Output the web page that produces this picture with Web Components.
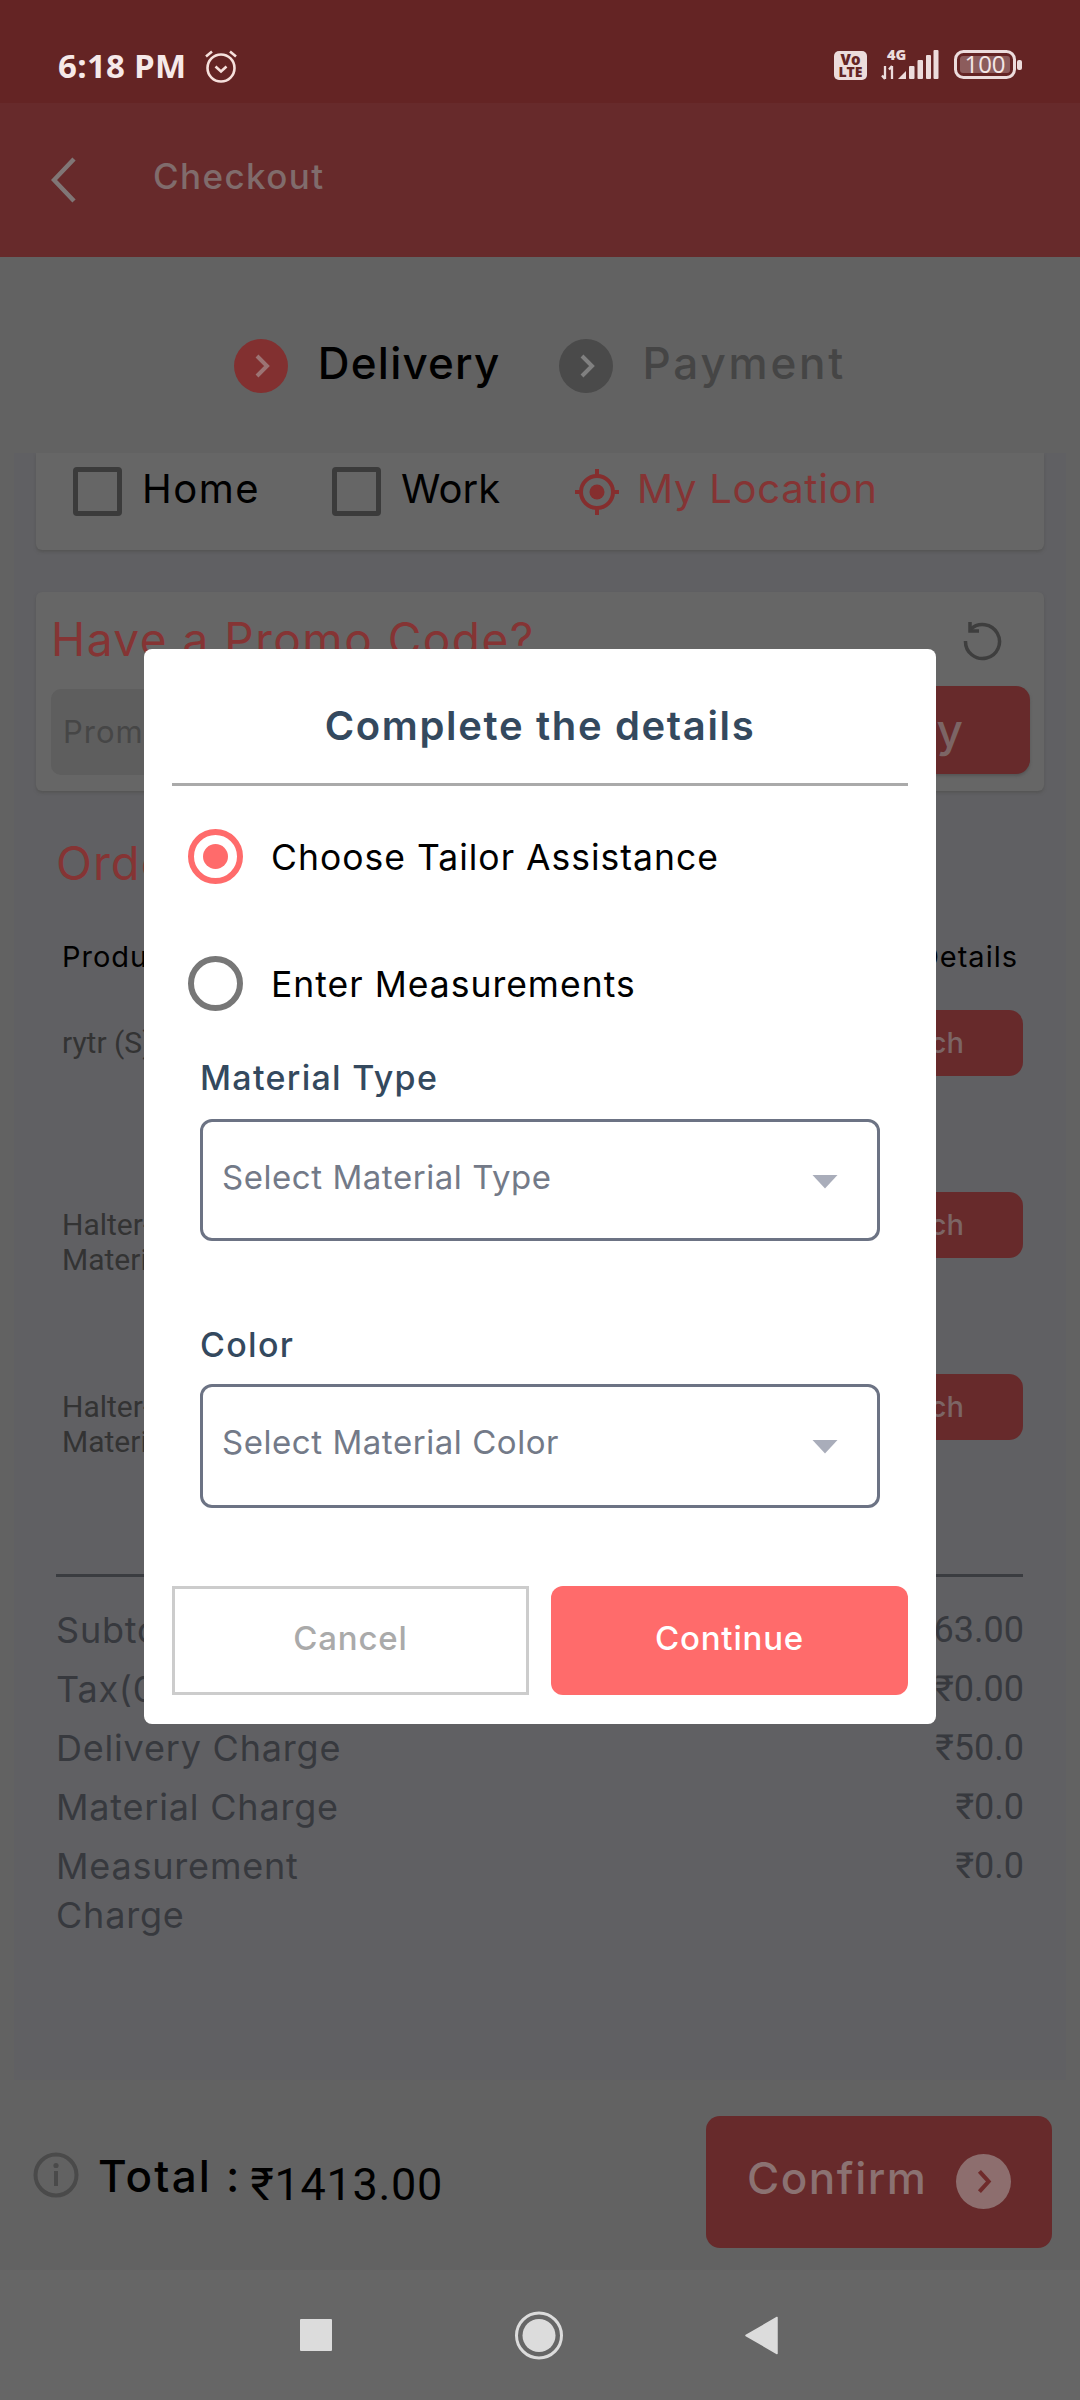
<!DOCTYPE html>
<html lang="en"><head><meta charset="utf-8"><title>Checkout</title>
<style>
html,body{margin:0;padding:0;background:#626262}
body{width:1080px;height:2400px;overflow:hidden;font-family:"Inter","Noto Sans",sans-serif}
</style></head><body>
<checkout-screen>
  <status-bar slot="status"></status-bar>
  <app-bar slot="bar"></app-bar>
  <step-header slot="steps"></step-header>
  <scroll-panel slot="panel">
    <address-card></address-card>
    <promo-card></promo-card>
    <order-summary></order-summary>
  </scroll-panel>
  <total-bar slot="total"></total-bar>
  <nav-bar slot="nav"></nav-bar>
  <details-dialog slot="dialog"></details-dialog>
</checkout-screen>
<script>
const P='"Inter","Noto Sans",sans-serif', R='Roboto,"Noto Sans",sans-serif';
function def(name,css,html){
  customElements.define(name,class extends HTMLElement{
    constructor(){super();this.attachShadow({mode:'open'});}
    connectedCallback(){const h=typeof html==='function'?html(this):html;this.shadowRoot.innerHTML='<style>'+css+'</style>'+h;}
  });
}
const chev=(c,w=4)=>`<svg width="54" height="54" viewBox="0 0 54 54"><path d="M23 17l10 10-10 10" fill="none" stroke="${c}" stroke-width="${w}"/></svg>`;

def('checkout-screen',`
:host{display:block;position:relative;width:1080px;height:2400px;overflow:hidden}
.col{display:flex;flex-direction:column;height:100%}
`,`<div class="col"><slot name="status"></slot><slot name="bar"></slot><slot name="steps"></slot><slot name="panel"></slot><slot name="total"></slot><slot name="nav"></slot></div><slot name="dialog"></slot>`);

def('status-bar',`
:host{display:flex;align-items:center;height:103px;background:#642424;color:#f6e9e9;box-sizing:border-box;padding:29px 58px 0;flex:none}
.t{font:700 33px/44px "Open Sans",sans-serif;margin-right:16px;white-space:nowrap;letter-spacing:.3px}
.sp{flex:1}
svg{display:block}
svg text{font-family:"Open Sans",sans-serif}
`,`<span class="t">6:18 PM</span>
<svg width="36" height="36" viewBox="0 0 36 36" fill="none" stroke="#f6e0dc" stroke-width="2.6"><circle cx="18" cy="20" r="13.5"/><path d="M12.5 18.5l5.5 5 5.5-5M3 8.5l6-5M33 8.5l-6-5"/></svg>
<span class="sp"></span>
<svg style="margin-right:-2px" width="190" height="44" viewBox="834 45 190 44">
<rect x="834" y="52" width="33" height="29" rx="5" fill="#ecdcdc"/>
<text x="850.5" y="65.500" font-size="15" font-weight="800" text-anchor="middle" fill="#642424">Vo</text>
<text x="850.5" y="78" font-size="14" font-weight="800" text-anchor="middle" fill="#642424">LTE</text>
<text x="887" y="61" font-size="14.5" font-weight="800" fill="#ecdcdc">4G</text>
<path d="M885 67v13M882 76.500l3 3.500M892 80V67M889 70.500l3-3.500" stroke="#ecdcdc" stroke-width="2.300" fill="none"/>
<g fill="#ecdcdc"><path d="M898 80l8-8v8z"/><rect x="909" y="67" width="5.500" height="13" rx="1"/><rect x="917.500" y="61" width="5.500" height="19" rx="1"/><rect x="926" y="56" width="5" height="24" rx="1"/><rect x="933.500" y="51" width="5" height="29" rx="1"/></g>
<rect x="955.500" y="52.500" width="59" height="26" rx="8" fill="none" stroke="#ecdcdc" stroke-width="3"/>
<rect x="960" y="57" width="50" height="17" rx="3" fill="#8c5c5c"/>
<text x="985" y="74" font-size="24" font-weight="500" text-anchor="middle" fill="#f3e7e7">100</text>
<rect x="1017" y="61" width="5" height="10" rx="2" fill="#ecdcdc"/>
</svg>`);

def('app-bar',`
:host{display:flex;align-items:center;height:154px;background:#672a2b;flex:none;box-sizing:border-box;padding:0 0 8px 51px}
span{font:500 35px/44px ${P};color:#806c6c;margin-left:77px;letter-spacing:1.400px}
svg{display:block;margin-top:8px}
`,`<svg width="25" height="46" viewBox="0 0 25 46"><path d="M23 2L3 23l20 21" fill="none" stroke="#807676" stroke-width="4.500"/></svg><span>Checkout</span>`);

def('step-header',`
:host{display:flex;align-items:center;justify-content:center;height:196px;background:#626262;flex:none;box-sizing:border-box;padding:22px 0 0}
.c{width:54px;height:54px;border-radius:50%;display:block;flex:none}
.a{background:#823030}.b{background:#4a4a4a}
span{font:500 44px/56px ${P};white-space:nowrap}
.t1{color:#000;margin:-6px 58px 0 30px;letter-spacing:1.200px}
.t2{color:#454545;margin:-6px 0 0 30px;letter-spacing:2.800px}
`,`<span class="c a">${chev('#9c7474')}</span><span class="t1">Delivery</span><span class="c b">${chev('#808080')}</span><span class="t2">Payment</span>`);

def('scroll-panel',`
:host{display:block;flex:none;height:1627px;margin:0 14px;background:#606063;box-sizing:border-box;padding:0 22px;overflow:hidden}
`,`<slot></slot>`);

def('address-card',`
:host{display:flex;align-items:flex-start;height:97px;background:#666;border-radius:0 0 6px 6px;box-shadow:0 2px 3px #555;box-sizing:border-box;padding:14px 0 0 37px;font:400 40px/50px ${P}}
.b{width:49px;height:49px;box-sizing:border-box;border:5px solid #3b3b3b;border-radius:4px;flex:none}
.t{color:#000;margin-left:20px;margin-top:-3px}
.h{letter-spacing:1.500px}
.loc{color:#853434;margin-left:18px;margin-top:-3px;letter-spacing:.700px}
svg{display:block;margin-top:2px;flex:none}
.w{margin-left:72px}
`,`<span class="b"></span><span class="t h">Home</span><span class="b w"></span><span class="t">Work</span>
<svg style="margin-left:75px" width="44" height="46" viewBox="0 0 44 46" fill="none" stroke="#852e2e" stroke-width="4"><circle cx="22" cy="23" r="16"/><circle cx="22" cy="23" r="7.500" fill="#852e2e" stroke="none"/><path d="M22 0v8M22 38v8M0 23h7M37 23h7"/></svg><span class="loc">My Location</span>`);

def('promo-card',`
:host{display:block;position:relative;height:199px;margin-top:42px;background:#666;border-radius:6px;box-shadow:0 2px 3px #555;box-sizing:border-box;padding:17px 14px 0 15px}
.h{display:flex;justify-content:space-between;align-items:center;height:59px}
.h span{font:400 46px/62px ${P};color:#853434;white-space:nowrap;letter-spacing:1.500px}
.h svg{margin-right:28px;display:block;margin-top:4px}
.r{display:flex;margin-top:18px;height:90px}
.i{flex:1;height:86px;margin-top:3px;background:#5e5e5e;border-radius:10px;font:400 31px/86px ${P};color:#464646;padding-left:12px;letter-spacing:1px}
.a{width:320px;height:88px;background:#672a2b;border-radius:14px;font:500 46px/88px ${P};color:#7c6565;text-align:right;box-sizing:border-box;padding-right:64px;letter-spacing:3px;box-shadow:0 2px 3px #555}
`,`<div class="h"><span>Have a Promo Code?</span><svg width="40" height="40" viewBox="0 0 40 40" fill="none" stroke="#3e3e3e" stroke-width="3.500"><path d="M8.500 8.500A17 17 0 1 1 3.500 20"/><path d="M8 1v9h9" /></svg></div>
<div class="r"><div class="i">Promo Code</div><div class="a">Apply</div></div>`);

def('order-summary',`
:host{display:block;font-family:${P}}
h2{margin:0;font:400 47px/60px ${P};color:#853434;padding:42px 0 0 20px;letter-spacing:1px}
.hd{display:flex;justify-content:space-between;font:400 29px/40px ${P};color:#000;padding:44px 26px 0 26px;letter-spacing:1px}
.row{display:flex;height:182px;justify-content:space-between;padding:0 21px 0 26px;box-sizing:border-box}
.rows{padding-top:33px}
.n{font:400 30px/35px ${R};color:#333;padding-top:15px;white-space:pre-line}
.btn{width:220px;height:66px;background:#672a2b;border-radius:14px;font:500 29px/66px ${P};color:#7c6565;text-align:right;box-sizing:border-box;padding-right:59px}
hr{border:0;height:3px;background:#3a3c40;margin:18px 21px 0 20px}
.s{display:flex;justify-content:space-between;padding:0 20px 0 20px;font:400 36px/49px ${P};color:#37393e;margin-bottom:10px;letter-spacing:.8px}
.s b{font:400 36px/49px ${R};color:#37393e;letter-spacing:0}
.sum{padding-top:29px}
.m{width:270px}
`,`<h2>Order</h2><div class="hd"><span>Product</span><span>Details</span></div>
<div class="rows">
<div class="row"><span class="n">rytr (S)</span><span class="btn">Attach</span></div>
<div class="row"><span class="n">Halter-neck
Material</span><span class="btn">Attach</span></div>
<div class="row"><span class="n">Halter-neck
Material</span><span class="btn">Attach</span></div>
</div>
<hr>
<div class="sum">
<div class="s"><span>Subtotal</span><b>₹1363.00</b></div>
<div class="s"><span>Tax(0%)</span><b>₹0.00</b></div>
<div class="s"><span>Delivery Charge</span><b>₹50.0</b></div>
<div class="s"><span>Material Charge</span><b>₹0.0</b></div>
<div class="s"><span class="m">Measurement Charge</span><b>₹0.0</b></div>
</div>`);

def('total-bar',`
:host{display:flex;align-items:center;height:190px;background:#626262;flex:none;box-sizing:border-box;padding:0 28px 0 33px}
svg{display:block;flex:none}
.t{font:500 44px/56px ${P};color:#000;margin-left:19px;margin-top:2px;white-space:nowrap;letter-spacing:2.200px}
.v{font:400 45px/56px ${R};color:#000;margin-left:9px;margin-top:20px;flex:1;white-space:nowrap;letter-spacing:.7px}
.c{width:346px;height:132px;background:#672a2b;border-radius:14px;display:flex;align-items:center;box-sizing:border-box;padding:0 41px 0 41px;margin-top:14px}
.c span{font:500 44px/56px ${P};color:#8b7272;flex:1;margin-top:-8px;letter-spacing:1.500px}
.d{width:55px;height:55px;border-radius:50%;background:#8d6e6e;flex:none;display:block;margin-top:-2px}
`,`<svg width="46" height="46" viewBox="0 0 46 46" fill="none"><circle cx="23" cy="23" r="20.500" stroke="#4a4a4a" stroke-width="4"/><circle cx="23" cy="13.500" r="2.600" fill="#4a4a4a"/><rect x="21" y="19" width="4" height="15" fill="#4a4a4a"/></svg>
<span class="t">Total :</span><span class="v">₹1413.00</span>
<div class="c"><span>Confirm</span><i class="d"><svg width="55" height="55" viewBox="0 0 54 54"><path d="M23 17l9 10-9 10" fill="none" stroke="#6f2b2b" stroke-width="4"/></svg></i></div>`);

def('nav-bar',`
:host{display:block;height:130px;background:#666;flex:none}
.r{display:flex;align-items:center;justify-content:center;height:100%;padding-top:2px;box-sizing:border-box}
svg{display:block}
`,`<div class="r"><svg width="480" height="50" viewBox="300 2311 480 50"><rect x="300" y="2319" width="32" height="32" rx="1" fill="#dcdcdc"/><circle cx="539" cy="2335.500" r="22.500" fill="none" stroke="#dcdcdc" stroke-width="3"/><circle cx="539" cy="2335.500" r="16.500" fill="#dcdcdc"/><path d="M777 2317.500v36L746 2335.500z" fill="#dcdcdc" stroke="#dcdcdc" stroke-width="1.500" stroke-linejoin="round"/></svg></div>`);

def('radio-row',`
:host{display:flex;align-items:center;height:55px;font:400 35.500px/55px ${P};color:#000;letter-spacing:1px}
i{display:block;width:55px;height:55px;border-radius:50%;box-sizing:border-box;border:6px solid #777;margin:0 28px 0 16px;flex:none;position:relative}
:host([on]) i{border-color:#ff6b6b}
:host([on]) i::after{content:"";position:absolute;inset:9px;border-radius:50%;background:#ff6b6b}
span{padding-top:2px}
`,`<i></i><span><slot></slot></span>`);

def('field-select',`
:host{display:block;padding:0 28px}
label{display:block;font:500 34px/46px ${P};color:#34495e;letter-spacing:1.300px}
.b{display:flex;justify-content:space-between;height:var(--h,122px);border:3px solid #6c7384;border-radius:12px;box-sizing:border-box;padding:0 38px 0 19px;margin-top:var(--g,18px);font:400 33px/46px ${P};color:#737a88;letter-spacing:.55px}
.b span{margin-top:32px}
svg{display:block;margin-top:52px}
`,h=>`<label>${h.getAttribute('label')||''}</label><div class="b"><span>${h.getAttribute('ph')||''}</span><svg width="28" height="15" viewBox="0 0 28 15"><path d="M1.500 1h25L14 14.500z" fill="#a9adba"/></svg></div>`);

def('details-dialog',`
:host{position:absolute;left:144px;top:649px;width:792px;height:1075px;background:#fff;border-radius:8px;box-sizing:border-box;padding:0 28px;display:block}
h1{margin:0;font:600 40px/135px ${P};color:#34495e;text-align:center;height:134px;padding-top:9px;box-sizing:border-box;letter-spacing:1.650px;white-space:nowrap}
hr{border:0;height:3px;background:#aaa;margin:0}
radio-row{margin-top:43px}
radio-row+radio-row{margin-top:72px}
field-select{margin-top:44px}
field-select+field-select{margin-top:81px;--g:16px;--h:124px}
.f{display:grid;grid-template-columns:1fr 1fr;gap:22px;margin-top:78px}
.f>*{height:109px;box-sizing:border-box;font:500 33px/98px ${P};text-align:center;letter-spacing:.8px}
.c{border:3px solid #ccc;color:#aaa}
.o{background:#ff6b6b;color:#fff;border-radius:12px;line-height:104px}
`,`<h1>Complete the details</h1><hr>
<radio-row on>Choose Tailor Assistance</radio-row><radio-row>Enter Measurements</radio-row>
<field-select label="Material Type" ph="Select Material Type"></field-select>
<field-select label="Color" ph="Select Material Color"></field-select>
<div class="f"><div class="c">Cancel</div><div class="o">Continue</div></div>`);
</script>
</body></html>
